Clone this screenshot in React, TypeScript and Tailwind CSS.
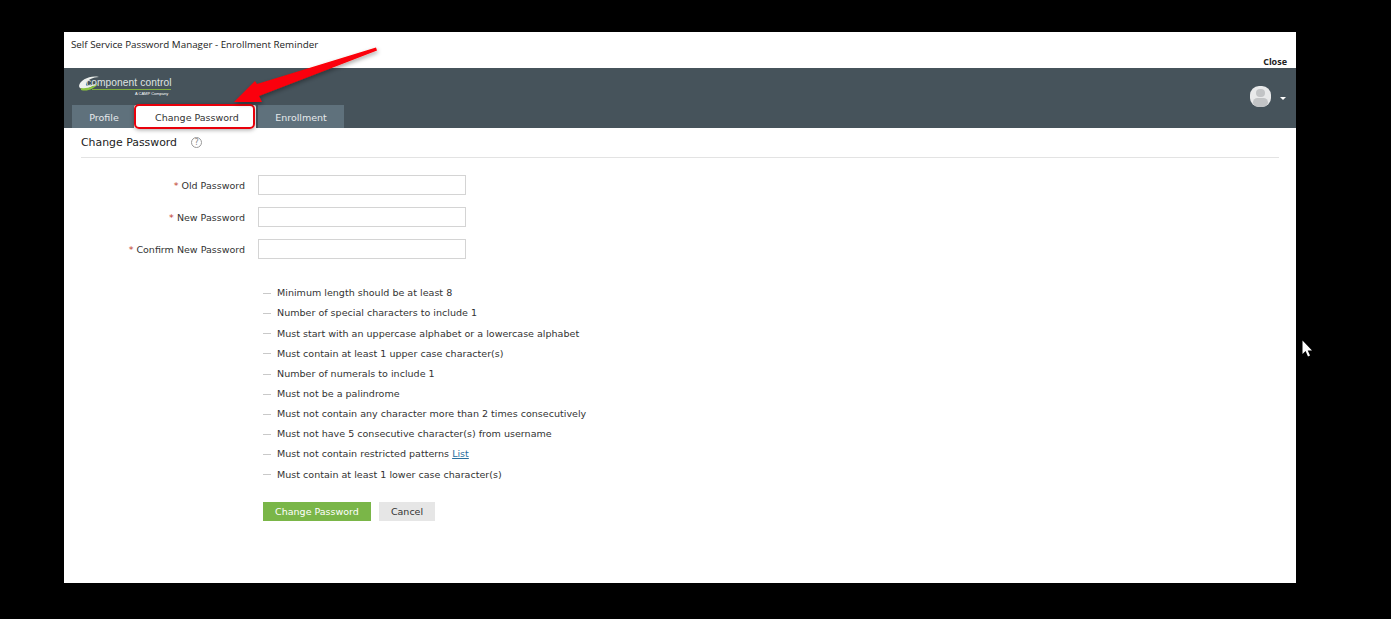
const rules = [
  'Minimum length should be at least 8',
  'Number of special characters to include 1',
  'Must start with an uppercase alphabet or a lowercase alphabet',
  'Must contain at least 1 upper case character(s)',
  'Number of numerals to include 1',
  'Must not be a palindrome',
  'Must not contain any character more than 2 times consecutively',
  'Must not have 5 consecutive character(s) from username',
  'Must not contain restricted patterns',
  'Must contain at least 1 lower case character(s)',
];

const fields = ['Old Password', 'New Password', 'Confirm New Password'];

function Logo() {
  return (
    <div className="relative w-[100px] h-[20px]">
      <svg width="26" height="18" viewBox="0 0 26 18" className="absolute left-0 top-[1px]">
        <path d="M1 11 C2 5 12 0 21 2 C15 2 9 5 8 9 C7 12 13 11 19 8 C14 13 2 17 1 11 Z" fill="#eef1ee" />
        <path d="M3 15 C9 17 16 14 21 8 C17 11 9 14 3 13 Z" fill="#8cc63f" />
      </svg>
      <span className="absolute left-[8px] top-[2px] text-[10.2px] leading-[14px] tracking-[0.1px] text-[#dfe3e3] whitespace-nowrap font-['Liberation_Sans',sans-serif]">
        component control
      </span>
      <div className="absolute left-[14px] top-[15px] w-[79px] h-px bg-[#7fae3c]" />
      <span className="absolute left-[57px] top-[17px] text-[4px] leading-[5px] text-white whitespace-nowrap font-['Liberation_Sans',sans-serif]">
        A CAMP Company
      </span>
    </div>
  );
}

function Arrow() {
  return (
    <svg width="150" height="70" viewBox="0 0 150 70" className="absolute left-[232px] top-[44px]">
      <defs>
        <filter id="arrowShadow" x="-10%" y="-20%" width="120%" height="150%">
          <feDropShadow dx="1" dy="2" stdDeviation="2" floodColor="#000" floodOpacity="0.35" />
        </filter>
      </defs>
      <path d="M144 3.5 L25 40 L23 37 L2 58 L30 58 L27 52 L145 6.5 Z" fill="#fb0007" filter="url(#arrowShadow)" />
    </svg>
  );
}

export default function App() {
  return (
    <div className="relative w-[1391px] h-[619px] overflow-hidden bg-black pt-8 pl-16 font-['DejaVu_Sans',sans-serif]">
      <div className="w-[1232px] h-[551px] bg-white flex flex-col">
        {/* Title */}
        <div className="h-9 relative shrink-0">
          <div className="pl-[7px] pt-[5px] text-[9.8px] leading-[16px] text-[#222] font-['Open_Sans',sans-serif]">
            Self Service Password Manager - Enrollment Reminder
          </div>
          <span className="absolute right-[9px] bottom-[1px] text-[9px] leading-[11px] font-bold text-[#222] font-['Open_Sans',sans-serif]">
            Close
          </span>
        </div>

        {/* Header */}
        <div className="h-[60px] shrink-0 bg-[#46535b] relative flex flex-col justify-between">
          <div className="pl-[14px] pt-[6px]">
            <Logo />
          </div>
          <div className="flex pl-2 text-[9.5px] leading-[25px] h-[23px]">
            <div className="w-[62px] bg-[#5f717c] text-center text-[#e6eaec] pl-[2px]">Profile</div>
            <div className="w-[122px] bg-white text-center text-[#333] pl-[4px] rounded-t-[2px]">Change Password</div>
            <div className="w-[86px] bg-[#5f717c] text-center text-[#e6eaec] ml-[2px]">Enrollment</div>
          </div>
          <div className="absolute right-[10px] top-[18px] flex items-center gap-[9px]">
            <div className="w-[21px] h-[21px] rounded-[9px] bg-[#e8e9ea] overflow-hidden flex flex-col items-center">
              <div className="w-[9px] h-[9px] rounded-full bg-[#c2c4c6] mt-[3px]" />
              <div className="w-[15px] h-[10px] rounded-full bg-[#c2c4c6] mt-px" />
            </div>
            <div className="w-0 h-0 border-x-[3.5px] border-x-transparent border-t-[3.5px] border-t-white mt-[4px]" />
          </div>
        </div>

        {/* Content */}
        <div className="flex-1 px-[17px]">
          <div className="h-[30px] flex items-center border-b border-[#e3e3e3]">
            <h1 className="text-[10.9px] leading-[16px] text-[#222] font-normal">Change Password</h1>
            <span className="ml-[14px] -mt-[1px] w-[11px] h-[11px] rounded-full border border-[#999] text-[8px] leading-[9px] text-center text-[#888]">?</span>
          </div>

          <div className="mt-[17px] flex flex-col gap-3">
            {fields.map((f) => (
              <div key={f} className="flex items-center h-5">
                <label className="w-[164px] pt-[2px] text-right text-[9.5px] text-[#333]">
                  <span className="text-[#c0392b]">*</span> {f}
                </label>
                <input className="ml-[13px] w-[208px] h-5 border border-[#d4d4d4] bg-white" />
              </div>
            ))}
          </div>

          <ul className="mt-[27px] ml-[182px] flex flex-col gap-[5.15px]">
            {rules.map((r, i) => (
              <li key={r} className="flex items-center h-[15px] text-[9.55px] text-[#333]">
                <span className="w-2 h-px bg-[#c9c9c9] mr-[6px]" />
                <span>
                  {r}
                  {i === 8 && (
                    <>
                      {' '}
                      <a className="text-[#2a6f9e] underline">List</a>
                    </>
                  )}
                </span>
              </li>
            ))}
          </ul>

          <div className="mt-5 ml-[182px] flex gap-2 text-[9.5px]">
            <button className="w-[108px] h-[19px] bg-[#7ab648] text-white">Change Password</button>
            <button className="w-[56px] h-[19px] bg-[#e6e6e6] text-[#333]">Cancel</button>
          </div>
        </div>
      </div>

      {/* Annotations drawn over the screenshot */}
      <div className="absolute left-[134px] top-[104px] w-[121px] h-[25px] rounded-[5px] border-2 border-[#e8000b] shadow-[0_1px_4px_rgba(0,0,0,0.35)]" />
      <Arrow />
      <svg width="12" height="18" viewBox="0 0 12 18" className="absolute left-[1302px] top-[340px]">
        <path d="M0.5 0.5 L0.5 14 L3.6 11 L6 16.5 L8 15.6 L5.7 10.5 L10 10.5 Z" fill="#fff" />
      </svg>
    </div>
  );
}
